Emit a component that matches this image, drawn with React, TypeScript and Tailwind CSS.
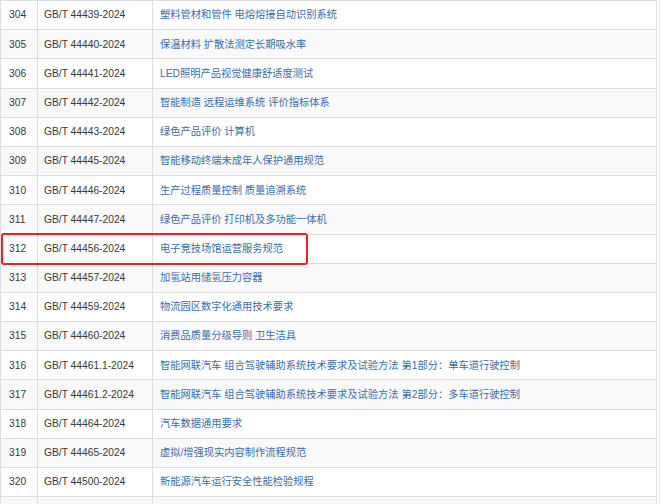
const rows: [string, string, string][] = [
  ['304', 'GB/T 44439-2024', '塑料管材和管件 电熔熔接自动识别系统'],
  ['305', 'GB/T 44440-2024', '保温材料 扩散法测定长期吸水率'],
  ['306', 'GB/T 44441-2024', 'LED照明产品视觉健康舒适度测试'],
  ['307', 'GB/T 44442-2024', '智能制造 远程运维系统 评价指标体系'],
  ['308', 'GB/T 44443-2024', '绿色产品评价 计算机'],
  ['309', 'GB/T 44445-2024', '智能移动终端未成年人保护通用规范'],
  ['310', 'GB/T 44446-2024', '生产过程质量控制 质量追溯系统'],
  ['311', 'GB/T 44447-2024', '绿色产品评价 打印机及多功能一体机'],
  ['312', 'GB/T 44456-2024', '电子竞技场馆运营服务规范'],
  ['313', 'GB/T 44457-2024', '加氢站用储氢压力容器'],
  ['314', 'GB/T 44459-2024', '物流园区数字化通用技术要求'],
  ['315', 'GB/T 44460-2024', '消费品质量分级导则 卫生洁具'],
  ['316', 'GB/T 44461.1-2024', '智能网联汽车 组合驾驶辅助系统技术要求及试验方法 第1部分：单车道行驶控制'],
  ['317', 'GB/T 44461.2-2024', '智能网联汽车 组合驾驶辅助系统技术要求及试验方法 第2部分：多车道行驶控制'],
  ['318', 'GB/T 44464-2024', '汽车数据通用要求'],
  ['319', 'GB/T 44465-2024', '虚拟/增强现实内容制作流程规范'],
  ['320', 'GB/T 44500-2024', '新能源汽车运行安全性能检验规程'],
  ['', '', ''],
];

export default function App() {
  return (
    <div
      className="relative w-[660px] h-[504px] overflow-hidden bg-white text-[10.25px] text-[#383838]"
      style={{ fontFamily: '"Liberation Sans", "Noto Sans CJK SC", sans-serif' }}
    >
      <div className="w-[657px] border-t border-l border-r border-[#dddddd]">
        {rows.map(([no, code, title], i) => (
          <div
            key={i}
            className={`flex h-[29.2px] border-b border-[#dddddd] ${
              i % 2 === 1 ? 'bg-[#f9f9f9]' : 'bg-white'
            }`}
          >
            <div className="w-[36px] shrink-0 flex items-center pl-[8px]">{no}</div>
            <div className="w-[115px] shrink-0 flex items-center pl-[6px] border-l border-[#dddddd]">
              {code}
            </div>
            <div className="flex-1 flex items-center pl-[7px] border-l border-[#dddddd] text-[#3a6ea8] whitespace-nowrap">
              {title}
            </div>
          </div>
        ))}
      </div>
      <div className="absolute right-0 top-0 w-[1px] h-full bg-[#e2e2e2]" />
      <div className="absolute left-[1px] top-[233px] w-[307px] h-[32px] border-2 border-[#e3262b] rounded-[3px]" />
    </div>
  );
}
